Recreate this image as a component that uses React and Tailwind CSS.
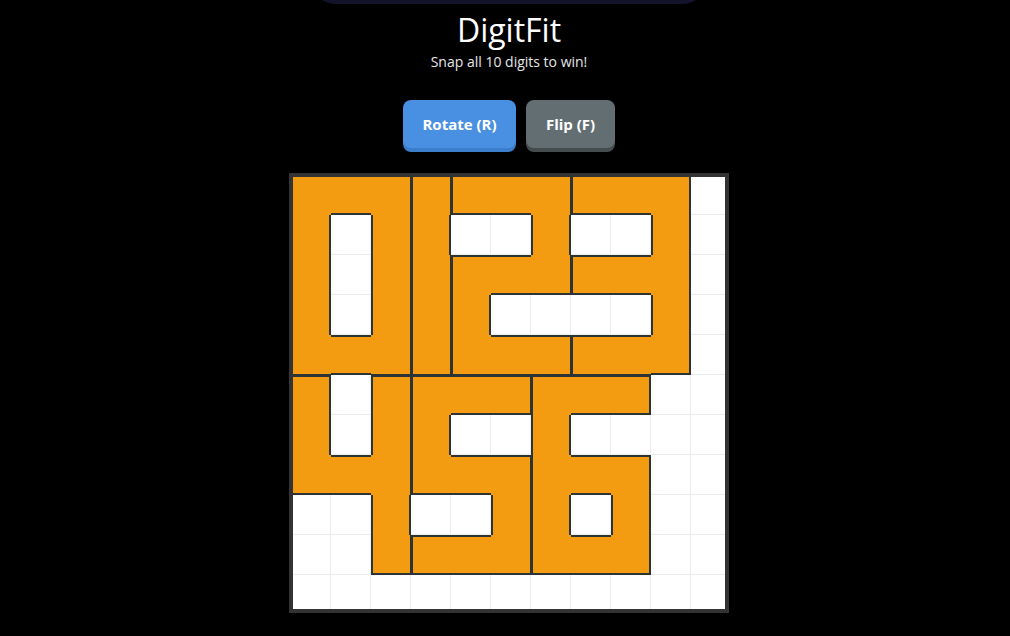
import React from "react";

const LAYOUT = [
	"0001222333.",
	"0.01..2..3.",
	"0.01222333.",
	"0.012....3.",
	"0001222333.",
	"4.4555666..",
	"4.45..6....",
	"444555666..",
	"..4..56.6..",
	"..4555666..",
	"...........",
].map((row) => row.split(""));

const EDGE = {
	top: { none: "", thin: "border-t", thick: "border-t-2" },
	right: { none: "", thin: "border-r", thick: "border-r-2" },
	bottom: { none: "", thin: "border-b", thick: "border-b-2" },
	left: { none: "", thin: "border-l", thick: "border-l-2" },
};

function edgeKind(id, r, c, side) {
	const n = LAYOUT[r] && LAYOUT[r][c];
	if (n === id) return "none";
	if (n === undefined || n === ".") return "thick";
	// shared edge between two pieces: top/left draw 2px, bottom/right 1px
	return side === "top" || side === "left" ? "thick" : "thin";
}

function Cell({ id, r, c }) {
	if (id === ".") {
		return <div className="w-[40px] h-[40px] bg-white border-r border-b border-[#ececec]" />;
	}
	const cls = [
		EDGE.top[edgeKind(id, r - 1, c, "top")],
		EDGE.right[edgeKind(id, r, c + 1, "right")],
		EDGE.bottom[edgeKind(id, r + 1, c, "bottom")],
		EDGE.left[edgeKind(id, r, c - 1, "left")],
	].join(" ");
	return <div className={`w-[40px] h-[40px] bg-[#f39c12] border-[#2d3436] ${cls}`} />;
}

function Board() {
	return (
		<div className="w-[440px] h-[440px] border-4 border-[#333333] bg-white overflow-hidden">
			<div className="grid grid-cols-[repeat(11,40px)] -ml-0.5 -mt-0.5 w-[440px]">
				{LAYOUT.map((row, r) =>
					row.map((id, c) => <Cell key={`${r}-${c}`} id={id} r={r} c={c} />)
				)}
			</div>
		</div>
	);
}

export default function App() {
	return (
		<div className="min-h-[636px] w-full bg-black font-['Open_Sans',sans-serif] text-white overflow-hidden">
			<div className="flex flex-col items-center pl-2">
				<div className="w-[392px] h-[44px] -mt-[40px] rounded-[22px] bg-[#13132a]" />
				<h1 className="mt-[6px] text-[32px] leading-[40px] font-normal">DigitFit</h1>
				<p className="mt-[2px] text-[14px] leading-[20px] text-[#e6e6e6]">Snap all 10 digits to win!</p>
				<div className="mt-[28px] flex gap-[10px]">
					<button className="w-[113px] h-[48px] rounded-lg bg-[#4a90e2] shadow-[0_4px_0_#3b7fcc] text-[15px] font-bold text-white">
						Rotate (R)
					</button>
					<button className="w-[89px] h-[48px] rounded-lg bg-[#636e72] shadow-[0_4px_0_#454c4f] text-[15px] font-bold text-white">
						Flip (F)
					</button>
				</div>
				<div className="mt-[25px]">
					<Board />
				</div>
			</div>
		</div>
	);
}
